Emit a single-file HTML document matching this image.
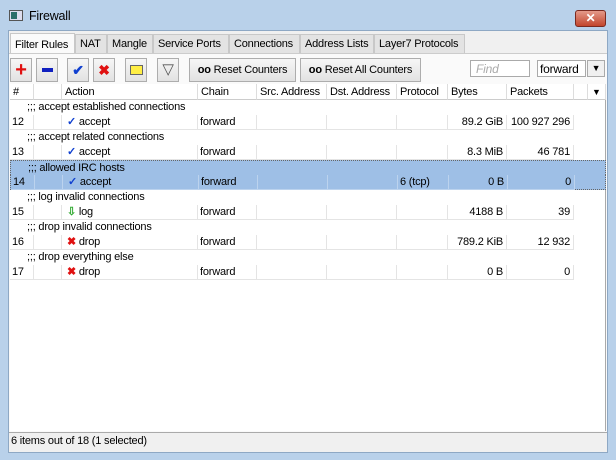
<!DOCTYPE html><html><head><style>
*{margin:0;padding:0;box-sizing:border-box}
body{width:616px;height:460px;background:#b9d1ea;font-family:"Liberation Sans",sans-serif;font-size:11px;color:#000;position:relative;overflow:hidden;letter-spacing:-0.2px}
.a{position:absolute}
.panel{left:8px;top:30px;width:600px;height:423px;background:#f0f0f0;border:1px solid #8ea8c4}
.tab{position:absolute;top:34px;height:19px;background:#e3e3e3;border:1px solid #c8c8c8;border-bottom:none;padding:3px 0 0 4px;font-size:11px;white-space:nowrap;overflow:hidden}
.btn{position:absolute;top:58px;height:24px;background:linear-gradient(#f6f6f6,#e2e2e2);border:1px solid #adadad;font-size:11px;text-align:center;line-height:22px;white-space:nowrap}
.hd{position:absolute;top:84px;height:16px;background:#fff;border-right:1px solid #ddd;border-bottom:1px solid #ccc;padding:2px 0 0 3px;font-size:11px;white-space:nowrap;overflow:hidden}
.row{position:absolute;left:10px;width:596px;height:15px;font-size:11px;line-height:15px;white-space:nowrap}
.c{position:absolute;top:0;height:15px;border-right:1px solid #e4e4e4;border-bottom:1px solid #e4e4e4}
.r{text-align:right;padding-right:3px}
.sel{background:#9ebfe6}
</style></head><body>
<div class="a" style="left:9px;top:10px;width:14px;height:11px;border:1px solid #555;background:#dde"></div>
<div class="a" style="left:11px;top:12px;width:6px;height:7px;background:#2c6e6a"></div>
<div class="a" style="left:29px;top:9px;font-size:12.5px">Firewall</div>
<div class="a" style="left:575px;top:10px;width:31px;height:17px;background:linear-gradient(#e49a8a,#c2452c);border:1px solid #7a2a20;border-radius:3px;color:#fff;text-align:center;font-weight:bold;font-size:12px;line-height:15px">✕</div>
<div class="a panel"></div>
<div class="tab" style="left:10px;top:33px;width:65px;height:21px;background:#fafafa;padding-top:5px">Filter Rules</div>
<div class="tab" style="left:75px;width:32px">NAT</div>
<div class="tab" style="left:107px;width:46px">Mangle</div>
<div class="tab" style="left:153px;width:76px">Service Ports</div>
<div class="tab" style="left:229px;width:71px">Connections</div>
<div class="tab" style="left:300px;width:74px">Address Lists</div>
<div class="tab" style="left:374px;width:91px">Layer7 Protocols</div>
<div class="a" style="left:9px;top:53px;width:598px;height:380px;background:#fafafa;border-top:1px solid #ccc"></div>
<div class="btn" style="left:10px;width:22px;color:#e01010;font-weight:bold;font-size:20px">+</div>
<div class="btn" style="left:36px;width:22px"><div class="a" style="left:5px;top:9px;width:11px;height:4px;background:#1020c0"></div></div>
<div class="btn" style="left:67px;width:22px;color:#1040d0;font-weight:bold;font-size:14px">✔</div>
<div class="btn" style="left:93px;width:22px;color:#e01010;font-weight:bold;font-size:14px">✖</div>
<div class="btn" style="left:125px;width:22px"><div class="a" style="left:4px;top:6px;width:13px;height:10px;background:#ffee44;border:1px solid #666"></div></div>
<div class="btn" style="left:157px;width:22px;color:#555;font-size:15px">▽</div>
<div class="btn" style="left:189px;width:107px"><b>oo</b> Reset Counters</div>
<div class="btn" style="left:300px;width:121px"><b>oo</b> Reset All Counters</div>
<div class="a" style="left:470px;top:60px;width:60px;height:17px;background:#fff;border:1px solid #aaa;color:#aaa;font-style:italic;padding:1px 0 0 5px;font-size:12px">Find</div>
<div class="a" style="left:537px;top:60px;width:49px;height:17px;background:#fff;border:1px solid #aaa;padding:1px 0 0 2px;font-size:12px">forward</div>
<div class="a" style="left:587px;top:60px;width:18px;height:17px;background:#f0f0f0;border:1px solid #aaa;text-align:center;font-size:9px;line-height:15px">▼</div>
<div class="a" style="left:10px;top:84px;width:596px;height:347px;background:#fff;border-right:1px solid #aaa"></div>
<div class="hd" style="left:10px;width:24px">#</div>
<div class="hd" style="left:34px;width:28px"></div>
<div class="hd" style="left:62px;width:136px">Action</div>
<div class="hd" style="left:198px;width:59px">Chain</div>
<div class="hd" style="left:257px;width:70px">Src. Address</div>
<div class="hd" style="left:327px;width:70px">Dst. Address</div>
<div class="hd" style="left:397px;width:51px">Protocol</div>
<div class="hd" style="left:448px;width:59px">Bytes</div>
<div class="hd" style="left:507px;width:67px">Packets</div>
<div class="hd" style="left:574px;width:14px"></div>
<div class="hd" style="left:588px;width:18px;font-size:9px;padding:3px 0 0 4px">▼</div>

<div class="row" style="top:100px;padding-left:17px">;;; accept established connections</div>
<div class="row" style="top:115px"><div class="c" style="left:0;width:24px;padding-left:2px">12</div><div class="c" style="left:24px;width:28px"></div><div class="c" style="left:52px;width:136px;padding-left:5px"><span style="color:#1040d0;font-weight:bold">✓</span> accept</div><div class="c" style="left:188px;width:59px;padding-left:2px">forward</div><div class="c" style="left:247px;width:70px"></div><div class="c" style="left:317px;width:70px"></div><div class="c" style="left:387px;width:51px"></div><div class="c r" style="left:438px;width:59px">89.2 GiB</div><div class="c r" style="left:497px;width:67px">100 927 296</div></div>
<div class="row" style="top:130px;padding-left:17px">;;; accept related connections</div>
<div class="row" style="top:145px"><div class="c" style="left:0;width:24px;padding-left:2px">13</div><div class="c" style="left:24px;width:28px"></div><div class="c" style="left:52px;width:136px;padding-left:5px"><span style="color:#1040d0;font-weight:bold">✓</span> accept</div><div class="c" style="left:188px;width:59px;padding-left:2px">forward</div><div class="c" style="left:247px;width:70px"></div><div class="c" style="left:317px;width:70px"></div><div class="c" style="left:387px;width:51px"></div><div class="c r" style="left:438px;width:59px">8.3 MiB</div><div class="c r" style="left:497px;width:67px">46 781</div></div>
<div class="row sel" style="top:160px;padding-left:17px;border:1px dotted #666;border-bottom:none">;;; allowed IRC hosts</div>
<div class="row sel" style="top:175px;border:1px dotted #666;border-top:none"><div class="c" style="left:0;width:24px;padding-left:2px;border-color:#bcd3ee">14</div><div class="c" style="left:24px;width:28px;border-color:#bcd3ee"></div><div class="c" style="left:52px;width:136px;padding-left:5px;border-color:#bcd3ee"><span style="color:#1040d0;font-weight:bold">✓</span> accept</div><div class="c" style="left:188px;width:59px;padding-left:2px;border-color:#bcd3ee">forward</div><div class="c" style="left:247px;width:70px;border-color:#bcd3ee"></div><div class="c" style="left:317px;width:70px;border-color:#bcd3ee"></div><div class="c" style="left:387px;width:51px;padding-left:2px;border-color:#bcd3ee">6 (tcp)</div><div class="c r" style="left:438px;width:59px;border-color:#bcd3ee">0 B</div><div class="c r" style="left:497px;width:67px;border-color:#bcd3ee">0</div></div>
<div class="row" style="top:190px;padding-left:17px">;;; log invalid connections</div>
<div class="row" style="top:205px"><div class="c" style="left:0;width:24px;padding-left:2px">15</div><div class="c" style="left:24px;width:28px"></div><div class="c" style="left:52px;width:136px;padding-left:5px"><span style="color:#3a3;font-weight:bold">⇩</span> log</div><div class="c" style="left:188px;width:59px;padding-left:2px">forward</div><div class="c" style="left:247px;width:70px"></div><div class="c" style="left:317px;width:70px"></div><div class="c" style="left:387px;width:51px"></div><div class="c r" style="left:438px;width:59px">4188 B</div><div class="c r" style="left:497px;width:67px">39</div></div>
<div class="row" style="top:220px;padding-left:17px">;;; drop invalid connections</div>
<div class="row" style="top:235px"><div class="c" style="left:0;width:24px;padding-left:2px">16</div><div class="c" style="left:24px;width:28px"></div><div class="c" style="left:52px;width:136px;padding-left:5px"><span style="color:#e01010;font-weight:bold">✖</span> drop</div><div class="c" style="left:188px;width:59px;padding-left:2px">forward</div><div class="c" style="left:247px;width:70px"></div><div class="c" style="left:317px;width:70px"></div><div class="c" style="left:387px;width:51px"></div><div class="c r" style="left:438px;width:59px">789.2 KiB</div><div class="c r" style="left:497px;width:67px">12 932</div></div>
<div class="row" style="top:250px;padding-left:17px">;;; drop everything else</div>
<div class="row" style="top:265px"><div class="c" style="left:0;width:24px;padding-left:2px">17</div><div class="c" style="left:24px;width:28px"></div><div class="c" style="left:52px;width:136px;padding-left:5px"><span style="color:#e01010;font-weight:bold">✖</span> drop</div><div class="c" style="left:188px;width:59px;padding-left:2px">forward</div><div class="c" style="left:247px;width:70px"></div><div class="c" style="left:317px;width:70px"></div><div class="c" style="left:387px;width:51px"></div><div class="c r" style="left:438px;width:59px">0 B</div><div class="c r" style="left:497px;width:67px">0</div></div>

<div class="a" style="left:9px;top:432px;width:598px;height:19px;background:#f0f0f0;border-top:1px solid #aaa;padding:2px 0 0 2px;font-size:11px">6 items out of 18 (1 selected)</div>
</body></html>
